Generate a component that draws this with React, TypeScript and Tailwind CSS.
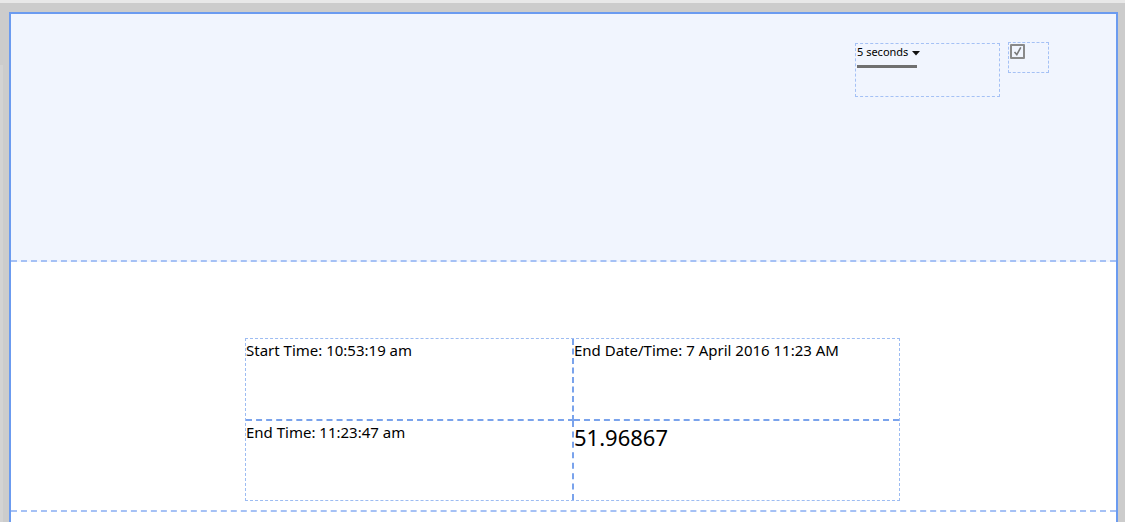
export default function App() {
  const font = { fontFamily: '"Noto Sans", "Open Sans", sans-serif' }
  return (
    <div className="w-[1125px] h-[522px] overflow-hidden bg-[#cccccc]" style={font}>
      <div className="h-[3px] bg-[#e8e8e8]" />
      <div className="flex h-[519px] pt-[9px]">
        <div className="w-[9px] flex flex-col">
          <div className="h-[53px]" />
          <div className="flex-1 w-[3px] bg-[#d3d3d3]" />
        </div>
        <div className="w-[1109px] border-t-2 border-x-2 border-[#6b9bf0] bg-white flex flex-col">
          <div className="h-[248px] bg-[#f1f5fe] border-b-2 border-dashed border-[#a5c1f5] flex justify-end items-start pt-[28px] pr-[67px] gap-[8px]">
            <div className="mt-[1px] w-[145px] h-[54px] border border-dashed border-[#a5c1f5] pl-[1px] pt-[1px]">
              <div className="flex items-center gap-[4px] text-[11px] leading-[14px] text-black">
                <span>5 seconds</span>
                <svg width="8" height="5" viewBox="0 0 8 5" className="mt-[3px]">
                  <path d="M0 0 L8 0 L4 4.5 Z" fill="#111" />
                </svg>
              </div>
              <div className="mt-[6px] w-[60px] h-[3px] bg-[#707070]" />
            </div>
            <div className="w-[41px] h-[31px] border border-dashed border-[#a5c1f5] pl-[1px] pt-[1px]">
              <div className="w-[15px] h-[15px] border-2 border-[#8a8a8a] rounded-[1px] flex items-center justify-center">
                <svg width="11" height="11" viewBox="0 0 11 11">
                  <path d="M2.5 6 L4.8 8.6 L8.8 1.4" fill="none" stroke="#7a7a7a" strokeWidth="1.6" />
                </svg>
              </div>
            </div>
          </div>
          <div className="pt-[76px]">
            <div className="ml-[234px] w-[655px] border border-dashed border-[#9dbcf2] grid grid-cols-[328px_325px] grid-rows-[82px_79px] text-[15px] leading-[20px] text-black">
              <div className="border-r-2 border-b-2 border-dashed border-[#7aa3ec] pt-[1px]">Start Time: 10:53:19 am</div>
              <div className="border-b-2 border-dashed border-[#7aa3ec] pt-[1px]">End Date/Time: 7 April 2016 11:23 AM</div>
              <div className="border-r-2 border-dashed border-[#7aa3ec] pt-[1px]">End Time: 11:23:47 am</div>
              <div className="text-[22px] leading-[30px] pt-[1px]">51.96867</div>
            </div>
            <div className="mt-[9px] border-b-2 border-dashed border-[#a5c1f5]" />
          </div>
        </div>
        <div className="flex-1" />
      </div>
    </div>
  )
}
